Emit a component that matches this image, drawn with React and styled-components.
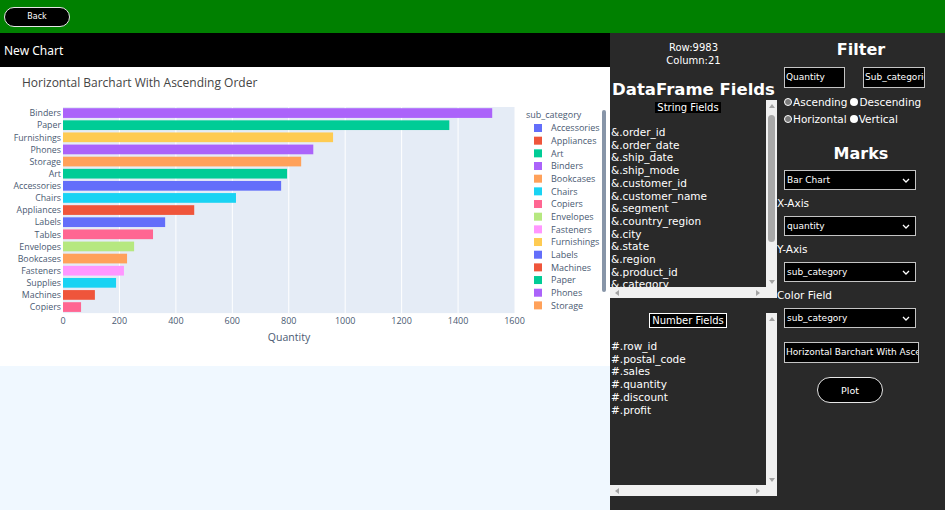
import React from "react";
import styled, { createGlobalStyle } from "styled-components";

const GlobalStyle = createGlobalStyle`
  html, body {
    margin: 0;
    padding: 0;
  }
  body {
    width: 945px;
    height: 510px;
    overflow: hidden;
    background: #f0f8ff;
    font-family: "DejaVu Sans", Verdana, sans-serif;
  }
`;

// ---- data
const bars = [
  { name: "Binders", value: 1521, color: "#ab63fa" },
  { name: "Paper", value: 1369, color: "#00cc96" },
  { name: "Furnishings", value: 957, color: "#fecb52" },
  { name: "Phones", value: 887, color: "#ab63fa" },
  { name: "Storage", value: 844, color: "#ffa15a" },
  { name: "Art", value: 794, color: "#00cc96" },
  { name: "Accessories", value: 773, color: "#636efa" },
  { name: "Chairs", value: 613, color: "#19d3f3" },
  { name: "Appliances", value: 465, color: "#ef553b" },
  { name: "Labels", value: 362, color: "#636efa" },
  { name: "Tables", value: 319, color: "#ff6692" },
  { name: "Envelopes", value: 252, color: "#b6e880" },
  { name: "Bookcases", value: 227, color: "#ffa15a" },
  { name: "Fasteners", value: 216, color: "#ff97ff" },
  { name: "Supplies", value: 188, color: "#19d3f3" },
  { name: "Machines", value: 113, color: "#ef553b" },
  { name: "Copiers", value: 64, color: "#ff6692" },
];

const legend = [
  ["Accessories", "#636efa"],
  ["Appliances", "#ef553b"],
  ["Art", "#00cc96"],
  ["Binders", "#ab63fa"],
  ["Bookcases", "#ffa15a"],
  ["Chairs", "#19d3f3"],
  ["Copiers", "#ff6692"],
  ["Envelopes", "#b6e880"],
  ["Fasteners", "#ff97ff"],
  ["Furnishings", "#fecb52"],
  ["Labels", "#636efa"],
  ["Machines", "#ef553b"],
  ["Paper", "#00cc96"],
  ["Phones", "#ab63fa"],
  ["Storage", "#ffa15a"],
  ["Supplies", "#19d3f3"],
];

// list is scrolled, only the first ones show
const stringFields = [
  "order_id",
  "order_date",
  "ship_date",
  "ship_mode",
  "customer_id",
  "customer_name",
  "segment",
  "country_region",
  "city",
  "state",
  "region",
  "product_id",
  "category",
];

const numberFields = ["row_id", "postal_code", "sales", "quantity", "discount", "profit"];

// ---- top bar
const TopBar = styled.div`
  height: 33px;
  background: #008000;
  display: flex;
  align-items: center;
  padding-left: 4px;
`;

const PillButton = styled.button`
  width: ${(p) => p.$w}px;
  height: ${(p) => p.$h}px;
  border-radius: ${(p) => p.$h / 2}px;
  background: #000;
  color: #fff;
  border: 1.5px solid #e6e6e6;
  font-family: "DejaVu Sans", Verdana, sans-serif;
  font-size: ${(p) => p.$fs}px;
  padding: 0;
  cursor: pointer;
`;

const Main = styled.div`
  display: flex;
  height: 477px;
`;

// ---- left side
const LeftPane = styled.div`
  width: 610px;
  display: flex;
  flex-direction: column;
`;

const ChartHeader = styled.div`
  height: 34px;
  background: #000;
  color: #fff;
  display: flex;
  align-items: center;
  padding-left: 4px;
  font-family: "Noto Sans", "Open Sans", sans-serif;
  font-size: 12px;
`;

const ChartCard = styled.div`
  height: 299px;
  background: #fff;
`;

const Blank = styled.div`
  flex: 1;
  background: #f0f8ff;
`;

// ---- right side
const RightPane = styled.div`
  width: 335px;
  background: #292929;
  color: #fff;
  display: flex;
`;

const FieldsCol = styled.div`
  width: 167px;
  display: flex;
  flex-direction: column;
`;

const Stats = styled.div`
  padding-top: 8px;
  text-align: center;
  font-size: 10px;
  line-height: 13px;
`;

const SectionTitle = styled.div`
  margin-top: ${(p) => p.$mt}px;
  text-align: center;
  font-weight: bold;
  font-size: ${(p) => p.$fs || 16}px;
  line-height: 18px;
  white-space: nowrap;
`;

const FieldBox = styled.div`
  display: grid;
  grid-template-columns: 156px 11px;
  grid-template-rows: ${(p) => p.$h}px 11px;
  margin-top: ${(p) => p.$mt}px;
`;

const FieldList = styled.div`
  overflow: hidden;
  display: flex;
  flex-direction: column;
`;

const BoxLabel = styled.div`
  align-self: center;
  background: #000;
  font-size: 10px;
  line-height: ${(p) => (p.$framed ? 13 : 11)}px;
  padding: 0 2px;
  margin-top: ${(p) => (p.$framed ? 0 : 2)}px;
  border: ${(p) => (p.$framed ? "1px solid #fff" : "none")};
  margin-bottom: ${(p) => (p.$framed ? 12 : 13)}px;
`;

const FieldItem = styled.div`
  font-size: 10.5px;
  line-height: 12.7px;
  padding-left: 1px;
  white-space: nowrap;
`;

const VBar = styled.div`
  background: #f0f0f0;
  display: flex;
  flex-direction: column;
  align-items: center;
`;

const HBar = styled.div`
  grid-column: 1 / span 2;
  background: #f0f0f0;
  display: flex;
  align-items: center;
  justify-content: space-between;
  padding: 0 17px 0 5px;
`;

const ArrowCell = styled.div`
  height: 11px;
  display: flex;
  align-items: center;
  justify-content: center;
`;

const Tri = styled.div`
  width: 0;
  height: 0;
  border: 3.5px solid transparent;
  ${(p) =>
    ({
      up: "border-bottom: 4px solid #a3a3a3; border-top-width: 0;",
      down: "border-top: 4px solid #a3a3a3; border-bottom-width: 0;",
      left: "border-right: 4px solid #a3a3a3; border-left-width: 0;",
      right: "border-left: 4px solid #a3a3a3; border-right-width: 0;",
    })[p.$dir]}
`;

const Track = styled.div`
  flex: 1;
  padding-top: 4px;
`;

const Thumb = styled.div`
  width: 7px;
  height: ${(p) => p.$h}px;
  border-radius: 4px;
  background: #a8a8a8;
`;

const ControlsCol = styled.div`
  width: 168px;
  display: flex;
  flex-direction: column;
  align-items: flex-start;
`;

const CenterTitle = styled(SectionTitle)`
  align-self: stretch;
`;

const InputRow = styled.div`
  display: flex;
  gap: 18px;
  margin: 8px 0 0 7px;
`;

const TextBox = styled.div`
  width: ${(p) => p.$w}px;
  height: 21px;
  box-sizing: border-box;
  border: 1.5px solid #c4c4c4;
  background: #000;
  font-size: 9px;
  line-height: 18px;
  padding-left: 1px;
  white-space: nowrap;
  overflow: hidden;
  margin-left: ${(p) => p.$ml || 0}px;
  margin-top: ${(p) => p.$mt || 0}px;
`;

const RadioRow = styled.div`
  display: flex;
  align-items: center;
  margin: ${(p) => p.$mt}px 0 0 7px;
  font-size: 10.5px;
  line-height: 14px;
  gap: 3px;
`;

const RadioItem = styled.label`
  display: flex;
  align-items: center;
  gap: 1px;
`;

const Dot = styled.span`
  width: 8px;
  height: 8px;
  box-sizing: border-box;
  border-radius: 50%;
  background: ${(p) => (p.$on ? "#fff" : "#7a7a7a")};
  border: ${(p) => (p.$on ? "none" : "1.5px solid #fff")};
`;

const FieldLabel = styled.div`
  margin-top: 6px;
  font-size: 10.5px;
  line-height: 14px;
`;

const Select = styled.div`
  width: 132px;
  height: 20px;
  box-sizing: border-box;
  margin: ${(p) => p.$mt}px 0 0 7px;
  border: 1.5px solid #c4c4c4;
  background: #000;
  display: flex;
  align-items: center;
  justify-content: space-between;
  padding: 0 5px 0 2px;
  font-size: 9px;
`;

const PlotWrap = styled.div`
  margin: 14px 0 0 40px;
`;

const ChevronDown = () => (
  <svg width="8" height="5" viewBox="0 0 8 5">
    <path d="M1 1 L4 4 L7 1" stroke="#fff" strokeWidth="1.3" fill="none" />
  </svg>
);

const ScrollBox = ({ height, mt, thumb, children }) => (
  <FieldBox $h={height} $mt={mt}>
    <FieldList>{children}</FieldList>
    <VBar>
      <ArrowCell>
        <Tri $dir="up" />
      </ArrowCell>
      <Track>{thumb ? <Thumb $h={thumb} /> : null}</Track>
      <ArrowCell>
        <Tri $dir="down" />
      </ArrowCell>
    </VBar>
    <HBar>
      <Tri $dir="left" />
      <Tri $dir="right" />
    </HBar>
  </FieldBox>
);

// ---- plotly-like chart
const X0 = 63;
const X1 = 514.5;
const TOP = 40;
const STEP = 12.125;
const sx = (v) => X0 + ((X1 - X0) * v) / 1600;
const axisFont = { fontFamily: "'Open Sans', sans-serif", fill: "#4a5a72" };

const BarChart = () => (
  <svg width="610" height="299" viewBox="0 0 610 299">
    <defs>
      <clipPath id="legendClip">
        <rect x="520" y="38" width="90" height="209" />
      </clipPath>
    </defs>
    <text x="22" y="20" fontSize="12" {...axisFont} fill="#444">
      Horizontal Barchart With Ascending Order
    </text>
    <rect x={X0} y={TOP} width={X1 - X0} height={STEP * 17} fill="#e5ecf6" />
    {[200, 400, 600, 800, 1000, 1200, 1400].map((v) => (
      <line key={v} x1={sx(v)} x2={sx(v)} y1={TOP} y2={TOP + STEP * 17} stroke="#fff" strokeWidth="1" />
    ))}
    {bars.map((b, i) => {
      const cy = TOP + STEP * i + STEP / 2;
      return (
        <g key={b.name}>
          <rect x={X0} y={cy - 4.85} width={sx(b.value) - X0} height="9.7" fill={b.color} />
          <text x={X0 - 2} y={cy + 3.2} fontSize="8.8" textAnchor="end" {...axisFont}>
            {b.name}
          </text>
        </g>
      );
    })}
    {[0, 200, 400, 600, 800, 1000, 1200, 1400, 1600].map((v) => (
      <text key={v} x={sx(v)} y="257" fontSize="9" textAnchor="middle" {...axisFont}>
        {v}
      </text>
    ))}
    <text x="289" y="274" fontSize="10.5" textAnchor="middle" {...axisFont}>
      Quantity
    </text>
    <text x="526" y="51" fontSize="9" {...axisFont}>
      sub_category
    </text>
    <g clipPath="url(#legendClip)">
      {legend.map(([name, color], i) => {
        const cy = 61 + i * 12.67;
        return (
          <g key={name}>
            <rect x="534" y={cy - 4} width="8" height="8" fill={color} />
            {i < 15 ? (
              <text x="551" y={cy + 3.2} fontSize="9" {...axisFont}>
                {name}
              </text>
            ) : null}
          </g>
        );
      })}
    </g>
    <rect x="602" y="43" width="4" height="182" rx="2" fill="#8795a8" />
  </svg>
);

export default function App() {
  return (
    <>
      <GlobalStyle />
      <TopBar>
        <PillButton $w={66} $h={20} $fs={8}>
          Back
        </PillButton>
      </TopBar>
      <Main>
        <LeftPane>
          <ChartHeader>New Chart</ChartHeader>
          <ChartCard>
            <BarChart />
          </ChartCard>
          <Blank />
        </LeftPane>
        <RightPane>
          <FieldsCol>
            <Stats>
              Row:9983
              <br />
              Column:21
            </Stats>
            <SectionTitle $mt={14} $fs={16.5}>
              DataFrame Fields
            </SectionTitle>
            <ScrollBox height={187} mt={1} thumb={127}>
              <BoxLabel>String Fields</BoxLabel>
              {stringFields.map((f) => (
                <FieldItem key={f}>&amp;.{f}</FieldItem>
              ))}
            </ScrollBox>
            <ScrollBox height={172} mt={15}>
              <BoxLabel $framed>Number Fields</BoxLabel>
              {numberFields.map((f) => (
                <FieldItem key={f}>#.{f}</FieldItem>
              ))}
            </ScrollBox>
          </FieldsCol>
          <ControlsCol>
            <CenterTitle $mt={8}>Filter</CenterTitle>
            <InputRow>
              <TextBox $w={61}>Quantity</TextBox>
              <TextBox $w={62}>Sub_categories</TextBox>
            </InputRow>
            <RadioRow $mt={7}>
              <RadioItem>
                <Dot />
                Ascending
              </RadioItem>
              <RadioItem>
                <Dot $on />
                Descending
              </RadioItem>
            </RadioRow>
            <RadioRow $mt={3}>
              <RadioItem>
                <Dot />
                Horizontal
              </RadioItem>
              <RadioItem>
                <Dot $on />
                Vertical
              </RadioItem>
            </RadioRow>
            <CenterTitle $mt={19}>Marks</CenterTitle>
            <Select $mt={7}>
              Bar Chart
              <ChevronDown />
            </Select>
            <FieldLabel>X-Axis</FieldLabel>
            <Select $mt={6}>
              quantity
              <ChevronDown />
            </Select>
            <FieldLabel>Y-Axis</FieldLabel>
            <Select $mt={6}>
              sub_category
              <ChevronDown />
            </Select>
            <FieldLabel>Color Field</FieldLabel>
            <Select $mt={6}>
              sub_category
              <ChevronDown />
            </Select>
            <TextBox $w={135} $ml={7} $mt={14}>
              Horizontal Barchart With Ascending Order
            </TextBox>
            <PlotWrap>
              <PillButton $w={66} $h={26} $fs={9.5}>
                Plot
              </PillButton>
            </PlotWrap>
          </ControlsCol>
        </RightPane>
      </Main>
    </>
  );
}
